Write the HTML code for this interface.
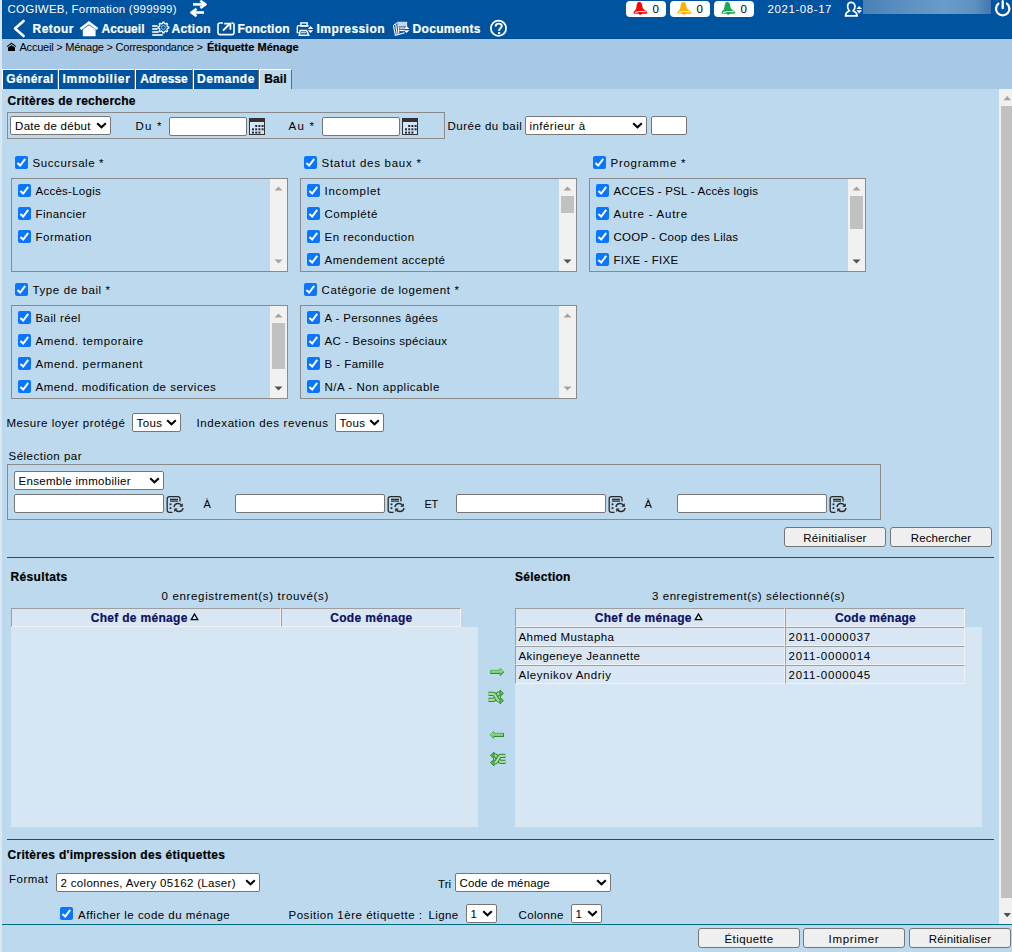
<!DOCTYPE html>
<html><head><meta charset="utf-8"><style>
html,body{margin:0;padding:0}
body{width:1012px;height:952px;position:relative;overflow:hidden;font-family:"Liberation Sans", sans-serif;background:#bdd9ed}
.t{position:absolute;white-space:nowrap}
svg{overflow:visible}
</style></head><body>
<div style="position:absolute;left:0px;top:0px;width:2px;height:952px;background:#d9e7f3"></div>
<div style="position:absolute;left:2px;top:0px;width:1010px;height:39px;background:#00539f"></div>
<div style="position:absolute;left:2px;top:38px;width:1010px;height:1px;background:#004d94"></div>
<div style="position:absolute;left:2px;top:39px;width:1010px;height:50px;background:#a8c9e5"></div>
<div style="position:absolute;left:2px;top:89px;width:1010px;height:863px;background:#bdd9ed"></div>
<div class="t" style="left:7.50px;top:1.00px;font-size:11.5px;line-height:16px;color:#fff;letter-spacing:0.231px">COGIWEB, Formation (999999)</div>
<svg style="position:absolute;left:188px;top:0px" width="22" height="18" viewBox="0 0 22 18"><g fill="none" stroke="#fff" stroke-width="2.6" stroke-linecap="butt" stroke-linejoin="round"><path d="M5 4.4H16.6"/><path d="M12.3 0.8L17.4 4.4L12.3 8"/><path d="M16 12.5H4.4"/><path d="M8.6 8.9L3.4 12.5L8.6 16.1"/></g></svg>
<div style="position:absolute;left:626px;top:1px;width:40px;height:16px;background:#fff;border-radius:4px"></div>
<svg style="position:absolute;left:626px;top:0px" width="40" height="18" viewBox="0 0 40 18"><path d="M13.4 1.7C11.4 1.9 10.7 3.8 10.5 6.4C10.3 8.9 9.6 10.1 7.9 11.4C7.1 12.1 7.5 13.7 8.7 13.7H20C21.2 13.7 21.5 12.1 20.7 11.4C19 10.1 16.5 8.9 16.3 6.4C16.1 3.8 15.4 1.9 13.4 1.7Z" fill="#ff0000"/><path d="M8.9 12.5Q14 10.9 19.9 11.8" fill="none" stroke="#fff" stroke-width="1.1"/><circle cx="14.3" cy="13.3" r="1.5" fill="#ff0000"/></svg>
<div class="t" style="left:652.50px;top:1.00px;font-size:11.5px;line-height:16px;color:#000;letter-spacing:0.594px">0</div>
<div style="position:absolute;left:670px;top:1px;width:40px;height:16px;background:#fff;border-radius:4px"></div>
<svg style="position:absolute;left:670px;top:0px" width="40" height="18" viewBox="0 0 40 18"><path d="M13.4 1.7C11.4 1.9 10.7 3.8 10.5 6.4C10.3 8.9 9.6 10.1 7.9 11.4C7.1 12.1 7.5 13.7 8.7 13.7H20C21.2 13.7 21.5 12.1 20.7 11.4C19 10.1 16.5 8.9 16.3 6.4C16.1 3.8 15.4 1.9 13.4 1.7Z" fill="#ffb000"/><path d="M8.9 12.5Q14 10.9 19.9 11.8" fill="none" stroke="#fff" stroke-width="1.1"/><circle cx="14.3" cy="13.3" r="1.5" fill="#ffb000"/></svg>
<div class="t" style="left:696.50px;top:1.00px;font-size:11.5px;line-height:16px;color:#000;letter-spacing:0.594px">0</div>
<div style="position:absolute;left:714px;top:1px;width:40px;height:16px;background:#fff;border-radius:4px"></div>
<svg style="position:absolute;left:714px;top:0px" width="40" height="18" viewBox="0 0 40 18"><path d="M13.4 1.7C11.4 1.9 10.7 3.8 10.5 6.4C10.3 8.9 9.6 10.1 7.9 11.4C7.1 12.1 7.5 13.7 8.7 13.7H20C21.2 13.7 21.5 12.1 20.7 11.4C19 10.1 16.5 8.9 16.3 6.4C16.1 3.8 15.4 1.9 13.4 1.7Z" fill="#1aaa55"/><path d="M8.9 12.5Q14 10.9 19.9 11.8" fill="none" stroke="#fff" stroke-width="1.1"/><circle cx="14.3" cy="13.3" r="1.5" fill="#1aaa55"/></svg>
<div class="t" style="left:740.50px;top:1.00px;font-size:11.5px;line-height:16px;color:#000;letter-spacing:0.594px">0</div>
<div class="t" style="left:767.50px;top:1.00px;font-size:11.5px;line-height:16px;color:#fff;letter-spacing:0.575px">2021-08-17</div>
<svg style="position:absolute;left:844px;top:1px" width="20" height="17" viewBox="0 0 20 17"><path d="M7.3 1.4C5 1.4 3.6 3.2 3.6 5.6C3.6 7.4 4.4 8.8 5.4 9.8C3 10.8 1.7 12.4 1.5 14.8H13.1C12.9 12.4 11.6 10.8 9.2 9.8C10.2 8.8 11 7.4 11 5.6C11 3.2 9.6 1.4 7.3 1.4Z" fill="none" stroke="#fff" stroke-width="1.7"/><path d="M12.4 7.9L15.2 5L18 7.9Z M12.4 9.2L15.2 12.6L18 9.2Z" fill="#fff"/></svg>
<div style="position:absolute;left:863px;top:0;width:128px;height:14px;background:linear-gradient(90deg,#4a80b6 0%,#5b8fc0 30%,#6a9cc9 65%,#5d90c0 88%,#4277ae 100%)"></div>
<svg style="position:absolute;left:993px;top:0px" width="19" height="17" viewBox="0 0 19 17"><g fill="none" stroke="#fff" stroke-width="2.3" stroke-linecap="round"><path d="M5.4 3.6A6.7 6.7 0 1 0 14 3.6"/><path d="M9.7 1.2V8.2"/></g></svg>
<svg style="position:absolute;left:12px;top:19px" width="14" height="19" viewBox="0 0 14 19"><path d="M11.6 2L3 9.5L11.6 17" fill="none" stroke="#fff" stroke-width="2.6" stroke-linecap="round" stroke-linejoin="round"/></svg>
<div class="t" style="left:32.50px;top:21.00px;font-size:12.0px;line-height:16px;color:#fff;font-weight:700;-webkit-text-stroke:0.2px #fff;letter-spacing:0.466px">Retour</div>
<svg style="position:absolute;left:79px;top:20px" width="20" height="18" viewBox="0 0 20 18"><path d="M1.5 9L10 2.6L18.5 9" fill="none" stroke="#fff" stroke-width="2.6"/><path d="M3.8 9.6L10 5.2L16.6 9.6V16.2H3.8Z" fill="#fff"/></svg>
<div class="t" style="left:101.50px;top:21.00px;font-size:12.0px;line-height:16px;color:#fff;font-weight:700;-webkit-text-stroke:0.2px #fff;letter-spacing:0.052px">Accueil</div>
<svg style="position:absolute;left:151px;top:20px" width="20" height="18" viewBox="0 0 20 18"><g fill="#fff"><rect x="1.2" y="5.2" width="5.4" height="1.6"/><rect x="1.2" y="8.2" width="5.4" height="1.6"/><rect x="1.2" y="11.2" width="6.6" height="1.6"/><rect x="1.2" y="14.2" width="10.6" height="1.6"/></g><g transform="translate(12.4 7.5)"><path d="M3.89 -0.94 L5.35 -0.70 L5.35 0.70 L3.89 0.94 L3.70 1.53 L3.41 2.08 L4.28 3.29 L3.29 4.28 L2.08 3.41 L1.53 3.70 L0.94 3.89 L0.70 5.35 L-0.70 5.35 L-0.94 3.89 L-1.53 3.70 L-2.08 3.41 L-3.29 4.28 L-4.28 3.29 L-3.41 2.08 L-3.70 1.53 L-3.89 0.94 L-5.35 0.70 L-5.35 -0.70 L-3.89 -0.94 L-3.70 -1.53 L-3.41 -2.08 L-4.28 -3.29 L-3.29 -4.28 L-2.08 -3.41 L-1.53 -3.70 L-0.94 -3.89 L-0.70 -5.35 L0.70 -5.35 L0.94 -3.89 L1.53 -3.70 L2.08 -3.41 L3.29 -4.28 L4.28 -3.29 L3.41 -2.08 L3.70 -1.53Z" fill="none" stroke="#fff" stroke-width="1.2" stroke-linejoin="round"/><circle r="1.9" fill="none" stroke="#9ec3e6" stroke-width="0.9"/></g></svg>
<div class="t" style="left:171.50px;top:21.00px;font-size:12.0px;line-height:16px;color:#fff;font-weight:700;-webkit-text-stroke:0.2px #fff;letter-spacing:0.331px">Action</div>
<svg style="position:absolute;left:217px;top:22px" width="19" height="14" viewBox="0 0 19 14"><path d="M6 1H3A2 2 0 0 0 1 3V10.6A2 2 0 0 0 3 12.6H15A2 2 0 0 0 17 10.6V3A2 2 0 0 0 15 1H14.5" fill="none" stroke="#fff" stroke-width="1.6"/><path d="M6 8.6L12.8 1.8" stroke="#fff" stroke-width="2"/><path d="M7.2 1.6H13.4V7.8" fill="none" stroke="#fff" stroke-width="1.8"/></svg>
<div class="t" style="left:237.50px;top:21.00px;font-size:12.0px;line-height:16px;color:#fff;font-weight:700;-webkit-text-stroke:0.2px #fff;letter-spacing:0.192px">Fonction</div>
<svg style="position:absolute;left:296px;top:21px" width="19" height="16" viewBox="0 0 19 16"><g fill="none" stroke="#fff" stroke-width="1.4"><rect x="4.9" y="1.9" width="6.2" height="3.2"/><path d="M2.8 11.6H1.3V6.1Q1.3 4.6 2.8 4.6H11.4Q12.4 4.6 12.6 5.4"/><path d="M4.2 9.4H10.6L12.8 14.3H3.2Z"/></g><rect x="4.6" y="10.6" width="5.6" height="1.6" fill="#c8d4e4"/><path d="M11.9 7.9L14.6 5L17.3 7.9Z M11.9 9.2L14.6 12.1L17.3 9.2Z" fill="#fff"/></svg>
<div class="t" style="left:316.50px;top:21.00px;font-size:12.0px;line-height:16px;color:#fff;font-weight:700;-webkit-text-stroke:0.2px #fff;letter-spacing:0.441px">Impression</div>
<svg style="position:absolute;left:392px;top:21px" width="19" height="16" viewBox="0 0 19 16"><g fill="none" stroke="#fff" stroke-width="1.1"><path d="M1.4 4.4L3.4 14.4L12.6 11.8"/><path d="M3.6 3.2L5.2 13.2"/><path d="M5.9 1.6L6.8 12.4"/></g><path d="M5.6 0.8H15.2V5.4H6.1Z" fill="#c6d6e8"/><path d="M1.4 4.4L5.6 1.2" stroke="#e6eef7" stroke-width="1"/><rect x="7.4" y="6.4" width="4.8" height="1.3" fill="#fff"/><rect x="7.4" y="8.8" width="4.8" height="1.3" fill="#fff"/><path d="M11.8 7.9L14.6 5L17.4 7.9Z M11.8 9.2L14.6 12.1L17.4 9.2Z" fill="#fff"/></svg>
<div class="t" style="left:412.50px;top:21.00px;font-size:12.0px;line-height:16px;color:#fff;font-weight:700;-webkit-text-stroke:0.2px #fff;letter-spacing:0.332px">Documents</div>
<svg style="position:absolute;left:489px;top:20px" width="19" height="18" viewBox="0 0 19 18"><circle cx="9.5" cy="8.3" r="7.6" fill="none" stroke="#fff" stroke-width="1.8"/><path d="M6.6 6.4C6.6 4.6 7.9 3.6 9.7 3.6C11.5 3.6 12.8 4.6 12.8 6.1C12.8 8 10.1 8.4 10.1 10.4V10.9" fill="none" stroke="#fff" stroke-width="1.9"/><rect x="9" y="12" width="2.2" height="2" fill="#fff"/></svg>
<svg style="position:absolute;left:6px;top:42px" width="11" height="10" viewBox="0 0 11 10"><path d="M1 4.6L5.5 1.3L10 4.6" fill="none" stroke="#111" stroke-width="1.1"/><path d="M2 5.6L5.5 3.2L9 5.6V8.9H2Z" fill="#000"/></svg>
<div class="t" style="left:19.50px;top:39.00px;font-size:11.0px;line-height:16px;color:#000;letter-spacing:-0.223px">Accueil &gt; Ménage &gt; Correspondance &gt;</div>
<div class="t" style="left:207.00px;top:39.00px;font-size:11.0px;line-height:16px;color:#000;font-weight:700;-webkit-text-stroke:0.2px #000;letter-spacing:0.035px">Étiquette Ménage</div>
<div style="position:absolute;left:2px;top:69px;width:56px;height:20px;box-sizing:border-box;background:#00539f;border-top:1px solid #fff;border-left:1px solid #fff;border-right:1px solid #6a6a6a"></div>
<div class="t" style="left:6.31px;top:71.00px;font-size:12.0px;line-height:16px;color:#fff;font-weight:700;-webkit-text-stroke:0.2px #fff;letter-spacing:0.383px">Général</div>
<div style="position:absolute;left:58px;top:69px;width:77px;height:20px;box-sizing:border-box;background:#00539f;border-top:1px solid #fff;border-left:1px solid #fff;border-right:1px solid #6a6a6a"></div>
<div class="t" style="left:62.43px;top:71.00px;font-size:12.0px;line-height:16px;color:#fff;font-weight:700;-webkit-text-stroke:0.2px #fff;letter-spacing:0.746px">Immobilier</div>
<div style="position:absolute;left:135px;top:69px;width:58px;height:20px;box-sizing:border-box;background:#00539f;border-top:1px solid #fff;border-left:1px solid #fff;border-right:1px solid #6a6a6a"></div>
<div class="t" style="left:140.31px;top:71.00px;font-size:12.0px;line-height:16px;color:#fff;font-weight:700;-webkit-text-stroke:0.2px #fff">Adresse</div>
<div style="position:absolute;left:193px;top:69px;width:66px;height:20px;box-sizing:border-box;background:#00539f;border-top:1px solid #fff;border-left:1px solid #fff;border-right:1px solid #6a6a6a"></div>
<div class="t" style="left:197.08px;top:71.00px;font-size:12.0px;line-height:16px;color:#fff;font-weight:700;-webkit-text-stroke:0.2px #fff;letter-spacing:0.545px">Demande</div>
<div style="position:absolute;left:259px;top:69px;width:33px;height:20px;box-sizing:border-box;background:#bdd9ed;border-top:1px solid #fff;border-left:1px solid #fff;border-right:1px solid #6a6a6a"></div>
<div class="t" style="left:264.24px;top:71.00px;font-size:12.0px;line-height:16px;color:#000;font-weight:700;-webkit-text-stroke:0.2px #000;letter-spacing:0.128px">Bail</div>
<div class="t" style="left:7.50px;top:93.00px;font-size:12.0px;line-height:16px;color:#000;font-weight:700;-webkit-text-stroke:0.2px #000;letter-spacing:0.230px">Critères de recherche</div>
<div style="position:absolute;left:7px;top:112px;width:438px;height:27px;box-sizing:border-box;border:1px solid #8a8a8a"></div>
<div style="position:absolute;left:10px;top:116px;width:101px;height:19px;box-sizing:border-box;background:#fff;border:1px solid #767676;border-radius:2px"></div>
<div class="t" style="left:15.10px;top:118.00px;font-size:11.5px;line-height:16px;color:#000;letter-spacing:0.253px">Date de début</div>
<svg style="position:absolute;left:96px;top:122px" width="11" height="7" viewBox="0 0 11 7"><path d="M1.2 1.2L5.5 5.3L9.8 1.2" fill="none" stroke="#000" stroke-width="2"/></svg>
<div class="t" style="left:135.50px;top:118.00px;font-size:11.5px;line-height:16px;color:#000;letter-spacing:1.208px">Du *</div>
<div style="position:absolute;left:169px;top:117px;width:78px;height:19px;box-sizing:border-box;background:#fff;border:1px solid #767676;border-radius:2px"></div>
<svg style="position:absolute;left:249px;top:117.6px" width="17" height="18" viewBox="0 0 17 18"><rect x="0.5" y="0.5" width="15" height="16" fill="#d6e6f4" stroke="#333" stroke-width="1"/><rect x="0" y="0" width="16" height="4" fill="#333"/><rect x="6.2" y="7.0" width="2" height="2" fill="#2a2a3a"/><rect x="9.4" y="7.0" width="2" height="2" fill="#2a2a3a"/><rect x="12.6" y="7.0" width="2" height="2" fill="#2a2a3a"/><rect x="3.0" y="10.3" width="2" height="2" fill="#2a2a3a"/><rect x="6.2" y="10.3" width="2" height="2" fill="#2a2a3a"/><rect x="9.4" y="10.3" width="2" height="2" fill="#2a2a3a"/><rect x="12.6" y="10.3" width="2" height="2" fill="#2a2a3a"/><rect x="3.0" y="13.6" width="2" height="2" fill="#2a2a3a"/><rect x="6.2" y="13.6" width="2" height="2" fill="#2a2a3a"/><rect x="9.4" y="13.6" width="2" height="2" fill="#2a2a3a"/></svg>
<div class="t" style="left:288.50px;top:118.00px;font-size:11.5px;line-height:16px;color:#000;letter-spacing:1.217px">Au *</div>
<div style="position:absolute;left:322px;top:117px;width:78px;height:19px;box-sizing:border-box;background:#fff;border:1px solid #767676;border-radius:2px"></div>
<svg style="position:absolute;left:402px;top:117.6px" width="17" height="18" viewBox="0 0 17 18"><rect x="0.5" y="0.5" width="15" height="16" fill="#d6e6f4" stroke="#333" stroke-width="1"/><rect x="0" y="0" width="16" height="4" fill="#333"/><rect x="6.2" y="7.0" width="2" height="2" fill="#2a2a3a"/><rect x="9.4" y="7.0" width="2" height="2" fill="#2a2a3a"/><rect x="12.6" y="7.0" width="2" height="2" fill="#2a2a3a"/><rect x="3.0" y="10.3" width="2" height="2" fill="#2a2a3a"/><rect x="6.2" y="10.3" width="2" height="2" fill="#2a2a3a"/><rect x="9.4" y="10.3" width="2" height="2" fill="#2a2a3a"/><rect x="12.6" y="10.3" width="2" height="2" fill="#2a2a3a"/><rect x="3.0" y="13.6" width="2" height="2" fill="#2a2a3a"/><rect x="6.2" y="13.6" width="2" height="2" fill="#2a2a3a"/><rect x="9.4" y="13.6" width="2" height="2" fill="#2a2a3a"/></svg>
<div class="t" style="left:447.50px;top:118.00px;font-size:11.5px;line-height:16px;color:#000;letter-spacing:0.491px">Durée du bail</div>
<div style="position:absolute;left:525px;top:116px;width:122px;height:19px;box-sizing:border-box;background:#fff;border:1px solid #767676;border-radius:2px"></div>
<div class="t" style="left:529.50px;top:118.00px;font-size:11.5px;line-height:16px;color:#000;letter-spacing:0.456px">inférieur à</div>
<svg style="position:absolute;left:632px;top:122px" width="11" height="7" viewBox="0 0 11 7"><path d="M1.2 1.2L5.5 5.3L9.8 1.2" fill="none" stroke="#000" stroke-width="2"/></svg>
<div style="position:absolute;left:651px;top:116px;width:36px;height:19px;box-sizing:border-box;background:#fff;border:1px solid #767676;border-radius:2px"></div>
<div style="position:absolute;left:15px;top:156px;width:13px;height:13px;background:#0a75ff;border-radius:2px"></div>
<svg style="position:absolute;left:15px;top:156px" width="13" height="13" viewBox="0 0 13 13"><path d="M2.4 7L5.2 9.6L10.2 2.9" fill="none" stroke="#fff" stroke-width="2"/></svg>
<div class="t" style="left:32.50px;top:155.00px;font-size:11.5px;line-height:16px;color:#000;letter-spacing:0.585px">Succursale *</div>
<div style="position:absolute;left:11px;top:178px;width:277px;height:94px;box-sizing:border-box;border:1px solid #8a8a8a"></div>
<div style="position:absolute;left:270px;top:179px;width:17px;height:92px;background:#f1f1f1"></div>
<svg style="position:absolute;left:270px;top:179px" width="17" height="17" viewBox="0 0 17 17"><path d="M4.5 11.5L8.5 7.5L12.5 11.5Z" fill="#a3a3a3"/></svg>
<svg style="position:absolute;left:270px;top:254px" width="17" height="17" viewBox="0 0 17 17"><path d="M4.5 5.5L8.5 9.5L12.5 5.5Z" fill="#a3a3a3"/></svg>
<div style="position:absolute;left:18px;top:184px;width:13px;height:13px;background:#0a75ff;border-radius:2px"></div>
<svg style="position:absolute;left:18px;top:184px" width="13" height="13" viewBox="0 0 13 13"><path d="M2.4 7L5.2 9.6L10.2 2.9" fill="none" stroke="#fff" stroke-width="2"/></svg>
<div class="t" style="left:35.50px;top:183.00px;font-size:11.5px;line-height:16px;color:#000;letter-spacing:0.256px">Accès-Logis</div>
<div style="position:absolute;left:18px;top:207px;width:13px;height:13px;background:#0a75ff;border-radius:2px"></div>
<svg style="position:absolute;left:18px;top:207px" width="13" height="13" viewBox="0 0 13 13"><path d="M2.4 7L5.2 9.6L10.2 2.9" fill="none" stroke="#fff" stroke-width="2"/></svg>
<div class="t" style="left:35.50px;top:206.00px;font-size:11.5px;line-height:16px;color:#000;letter-spacing:0.423px">Financier</div>
<div style="position:absolute;left:18px;top:230px;width:13px;height:13px;background:#0a75ff;border-radius:2px"></div>
<svg style="position:absolute;left:18px;top:230px" width="13" height="13" viewBox="0 0 13 13"><path d="M2.4 7L5.2 9.6L10.2 2.9" fill="none" stroke="#fff" stroke-width="2"/></svg>
<div class="t" style="left:35.50px;top:229.00px;font-size:11.5px;line-height:16px;color:#000;letter-spacing:0.527px">Formation</div>
<div style="position:absolute;left:304px;top:156px;width:13px;height:13px;background:#0a75ff;border-radius:2px"></div>
<svg style="position:absolute;left:304px;top:156px" width="13" height="13" viewBox="0 0 13 13"><path d="M2.4 7L5.2 9.6L10.2 2.9" fill="none" stroke="#fff" stroke-width="2"/></svg>
<div class="t" style="left:321.50px;top:155.00px;font-size:11.5px;line-height:16px;color:#000;letter-spacing:0.738px">Statut des baux *</div>
<div style="position:absolute;left:300px;top:178px;width:277px;height:94px;box-sizing:border-box;border:1px solid #8a8a8a"></div>
<div style="position:absolute;left:559px;top:179px;width:17px;height:92px;background:#f1f1f1"></div>
<svg style="position:absolute;left:559px;top:179px" width="17" height="17" viewBox="0 0 17 17"><path d="M4.5 11.5L8.5 7.5L12.5 11.5Z" fill="#a3a3a3"/></svg>
<svg style="position:absolute;left:559px;top:254px" width="17" height="17" viewBox="0 0 17 17"><path d="M4.5 5.5L8.5 9.5L12.5 5.5Z" fill="#505050"/></svg>
<div style="position:absolute;left:561px;top:196px;width:13px;height:17px;background:#c1c1c1"></div>
<div style="position:absolute;left:307px;top:184px;width:13px;height:13px;background:#0a75ff;border-radius:2px"></div>
<svg style="position:absolute;left:307px;top:184px" width="13" height="13" viewBox="0 0 13 13"><path d="M2.4 7L5.2 9.6L10.2 2.9" fill="none" stroke="#fff" stroke-width="2"/></svg>
<div class="t" style="left:324.50px;top:183.00px;font-size:11.5px;line-height:16px;color:#000;letter-spacing:0.743px">Incomplet</div>
<div style="position:absolute;left:307px;top:207px;width:13px;height:13px;background:#0a75ff;border-radius:2px"></div>
<svg style="position:absolute;left:307px;top:207px" width="13" height="13" viewBox="0 0 13 13"><path d="M2.4 7L5.2 9.6L10.2 2.9" fill="none" stroke="#fff" stroke-width="2"/></svg>
<div class="t" style="left:324.50px;top:206.00px;font-size:11.5px;line-height:16px;color:#000;letter-spacing:0.526px">Complété</div>
<div style="position:absolute;left:307px;top:230px;width:13px;height:13px;background:#0a75ff;border-radius:2px"></div>
<svg style="position:absolute;left:307px;top:230px" width="13" height="13" viewBox="0 0 13 13"><path d="M2.4 7L5.2 9.6L10.2 2.9" fill="none" stroke="#fff" stroke-width="2"/></svg>
<div class="t" style="left:324.50px;top:229.00px;font-size:11.5px;line-height:16px;color:#000;letter-spacing:0.462px">En reconduction</div>
<div style="position:absolute;left:307px;top:253px;width:13px;height:13px;background:#0a75ff;border-radius:2px"></div>
<svg style="position:absolute;left:307px;top:253px" width="13" height="13" viewBox="0 0 13 13"><path d="M2.4 7L5.2 9.6L10.2 2.9" fill="none" stroke="#fff" stroke-width="2"/></svg>
<div class="t" style="left:324.50px;top:252.00px;font-size:11.5px;line-height:16px;color:#000;letter-spacing:0.507px">Amendement accepté</div>
<div style="position:absolute;left:593px;top:156px;width:13px;height:13px;background:#0a75ff;border-radius:2px"></div>
<svg style="position:absolute;left:593px;top:156px" width="13" height="13" viewBox="0 0 13 13"><path d="M2.4 7L5.2 9.6L10.2 2.9" fill="none" stroke="#fff" stroke-width="2"/></svg>
<div class="t" style="left:610.50px;top:155.00px;font-size:11.5px;line-height:16px;color:#000;letter-spacing:0.715px">Programme *</div>
<div style="position:absolute;left:589px;top:178px;width:277px;height:94px;box-sizing:border-box;border:1px solid #8a8a8a"></div>
<div style="position:absolute;left:848px;top:179px;width:17px;height:92px;background:#f1f1f1"></div>
<svg style="position:absolute;left:848px;top:179px" width="17" height="17" viewBox="0 0 17 17"><path d="M4.5 11.5L8.5 7.5L12.5 11.5Z" fill="#a3a3a3"/></svg>
<svg style="position:absolute;left:848px;top:254px" width="17" height="17" viewBox="0 0 17 17"><path d="M4.5 5.5L8.5 9.5L12.5 5.5Z" fill="#505050"/></svg>
<div style="position:absolute;left:850px;top:196px;width:13px;height:33px;background:#c1c1c1"></div>
<div style="position:absolute;left:596px;top:184px;width:13px;height:13px;background:#0a75ff;border-radius:2px"></div>
<svg style="position:absolute;left:596px;top:184px" width="13" height="13" viewBox="0 0 13 13"><path d="M2.4 7L5.2 9.6L10.2 2.9" fill="none" stroke="#fff" stroke-width="2"/></svg>
<div class="t" style="left:613.50px;top:183.00px;font-size:11.5px;line-height:16px;color:#000;letter-spacing:0.233px">ACCES - PSL - Accès logis</div>
<div style="position:absolute;left:596px;top:207px;width:13px;height:13px;background:#0a75ff;border-radius:2px"></div>
<svg style="position:absolute;left:596px;top:207px" width="13" height="13" viewBox="0 0 13 13"><path d="M2.4 7L5.2 9.6L10.2 2.9" fill="none" stroke="#fff" stroke-width="2"/></svg>
<div class="t" style="left:613.50px;top:206.00px;font-size:11.5px;line-height:16px;color:#000;letter-spacing:0.753px">Autre - Autre</div>
<div style="position:absolute;left:596px;top:230px;width:13px;height:13px;background:#0a75ff;border-radius:2px"></div>
<svg style="position:absolute;left:596px;top:230px" width="13" height="13" viewBox="0 0 13 13"><path d="M2.4 7L5.2 9.6L10.2 2.9" fill="none" stroke="#fff" stroke-width="2"/></svg>
<div class="t" style="left:613.50px;top:229.00px;font-size:11.5px;line-height:16px;color:#000;letter-spacing:0.232px">COOP - Coop des Lilas</div>
<div style="position:absolute;left:596px;top:253px;width:13px;height:13px;background:#0a75ff;border-radius:2px"></div>
<svg style="position:absolute;left:596px;top:253px" width="13" height="13" viewBox="0 0 13 13"><path d="M2.4 7L5.2 9.6L10.2 2.9" fill="none" stroke="#fff" stroke-width="2"/></svg>
<div class="t" style="left:613.50px;top:252.00px;font-size:11.5px;line-height:16px;color:#000;letter-spacing:0.336px">FIXE - FIXE</div>
<div style="position:absolute;left:15px;top:283px;width:13px;height:13px;background:#0a75ff;border-radius:2px"></div>
<svg style="position:absolute;left:15px;top:283px" width="13" height="13" viewBox="0 0 13 13"><path d="M2.4 7L5.2 9.6L10.2 2.9" fill="none" stroke="#fff" stroke-width="2"/></svg>
<div class="t" style="left:32.50px;top:282.00px;font-size:11.5px;line-height:16px;color:#000;letter-spacing:0.601px">Type de bail *</div>
<div style="position:absolute;left:11px;top:305px;width:277px;height:94px;box-sizing:border-box;border:1px solid #8a8a8a"></div>
<div style="position:absolute;left:270px;top:306px;width:17px;height:92px;background:#f1f1f1"></div>
<svg style="position:absolute;left:270px;top:306px" width="17" height="17" viewBox="0 0 17 17"><path d="M4.5 11.5L8.5 7.5L12.5 11.5Z" fill="#a3a3a3"/></svg>
<svg style="position:absolute;left:270px;top:381px" width="17" height="17" viewBox="0 0 17 17"><path d="M4.5 5.5L8.5 9.5L12.5 5.5Z" fill="#505050"/></svg>
<div style="position:absolute;left:272px;top:323px;width:13px;height:46px;background:#c1c1c1"></div>
<div style="position:absolute;left:18px;top:311px;width:13px;height:13px;background:#0a75ff;border-radius:2px"></div>
<svg style="position:absolute;left:18px;top:311px" width="13" height="13" viewBox="0 0 13 13"><path d="M2.4 7L5.2 9.6L10.2 2.9" fill="none" stroke="#fff" stroke-width="2"/></svg>
<div class="t" style="left:35.50px;top:310.00px;font-size:11.5px;line-height:16px;color:#000;letter-spacing:0.417px">Bail réel</div>
<div style="position:absolute;left:18px;top:334px;width:13px;height:13px;background:#0a75ff;border-radius:2px"></div>
<svg style="position:absolute;left:18px;top:334px" width="13" height="13" viewBox="0 0 13 13"><path d="M2.4 7L5.2 9.6L10.2 2.9" fill="none" stroke="#fff" stroke-width="2"/></svg>
<div class="t" style="left:35.50px;top:333.00px;font-size:11.5px;line-height:16px;color:#000;letter-spacing:0.619px">Amend. temporaire</div>
<div style="position:absolute;left:18px;top:357px;width:13px;height:13px;background:#0a75ff;border-radius:2px"></div>
<svg style="position:absolute;left:18px;top:357px" width="13" height="13" viewBox="0 0 13 13"><path d="M2.4 7L5.2 9.6L10.2 2.9" fill="none" stroke="#fff" stroke-width="2"/></svg>
<div class="t" style="left:35.50px;top:356.00px;font-size:11.5px;line-height:16px;color:#000;letter-spacing:0.613px">Amend. permanent</div>
<div style="position:absolute;left:18px;top:380px;width:13px;height:13px;background:#0a75ff;border-radius:2px"></div>
<svg style="position:absolute;left:18px;top:380px" width="13" height="13" viewBox="0 0 13 13"><path d="M2.4 7L5.2 9.6L10.2 2.9" fill="none" stroke="#fff" stroke-width="2"/></svg>
<div class="t" style="left:35.50px;top:379.00px;font-size:11.5px;line-height:16px;color:#000;letter-spacing:0.491px">Amend. modification de services</div>
<div style="position:absolute;left:304px;top:283px;width:13px;height:13px;background:#0a75ff;border-radius:2px"></div>
<svg style="position:absolute;left:304px;top:283px" width="13" height="13" viewBox="0 0 13 13"><path d="M2.4 7L5.2 9.6L10.2 2.9" fill="none" stroke="#fff" stroke-width="2"/></svg>
<div class="t" style="left:321.50px;top:282.00px;font-size:11.5px;line-height:16px;color:#000;letter-spacing:0.608px">Catégorie de logement *</div>
<div style="position:absolute;left:300px;top:305px;width:277px;height:94px;box-sizing:border-box;border:1px solid #8a8a8a"></div>
<div style="position:absolute;left:559px;top:306px;width:17px;height:92px;background:#f1f1f1"></div>
<svg style="position:absolute;left:559px;top:306px" width="17" height="17" viewBox="0 0 17 17"><path d="M4.5 11.5L8.5 7.5L12.5 11.5Z" fill="#a3a3a3"/></svg>
<svg style="position:absolute;left:559px;top:381px" width="17" height="17" viewBox="0 0 17 17"><path d="M4.5 5.5L8.5 9.5L12.5 5.5Z" fill="#a3a3a3"/></svg>
<div style="position:absolute;left:307px;top:311px;width:13px;height:13px;background:#0a75ff;border-radius:2px"></div>
<svg style="position:absolute;left:307px;top:311px" width="13" height="13" viewBox="0 0 13 13"><path d="M2.4 7L5.2 9.6L10.2 2.9" fill="none" stroke="#fff" stroke-width="2"/></svg>
<div class="t" style="left:324.50px;top:310.00px;font-size:11.5px;line-height:16px;color:#000;letter-spacing:0.363px">A - Personnes âgées</div>
<div style="position:absolute;left:307px;top:334px;width:13px;height:13px;background:#0a75ff;border-radius:2px"></div>
<svg style="position:absolute;left:307px;top:334px" width="13" height="13" viewBox="0 0 13 13"><path d="M2.4 7L5.2 9.6L10.2 2.9" fill="none" stroke="#fff" stroke-width="2"/></svg>
<div class="t" style="left:324.50px;top:333.00px;font-size:11.5px;line-height:16px;color:#000;letter-spacing:0.340px">AC - Besoins spéciaux</div>
<div style="position:absolute;left:307px;top:357px;width:13px;height:13px;background:#0a75ff;border-radius:2px"></div>
<svg style="position:absolute;left:307px;top:357px" width="13" height="13" viewBox="0 0 13 13"><path d="M2.4 7L5.2 9.6L10.2 2.9" fill="none" stroke="#fff" stroke-width="2"/></svg>
<div class="t" style="left:324.50px;top:356.00px;font-size:11.5px;line-height:16px;color:#000;letter-spacing:0.445px">B - Famille</div>
<div style="position:absolute;left:307px;top:380px;width:13px;height:13px;background:#0a75ff;border-radius:2px"></div>
<svg style="position:absolute;left:307px;top:380px" width="13" height="13" viewBox="0 0 13 13"><path d="M2.4 7L5.2 9.6L10.2 2.9" fill="none" stroke="#fff" stroke-width="2"/></svg>
<div class="t" style="left:324.50px;top:379.00px;font-size:11.5px;line-height:16px;color:#000;letter-spacing:0.524px">N/A - Non applicable</div>
<div class="t" style="left:6.50px;top:415.00px;font-size:11.5px;line-height:16px;color:#000;letter-spacing:0.512px">Mesure loyer protégé</div>
<div style="position:absolute;left:132px;top:413px;width:49px;height:19px;box-sizing:border-box;background:#fff;border:1px solid #767676;border-radius:2px"></div>
<div class="t" style="left:136.50px;top:415.00px;font-size:11.5px;line-height:16px;color:#000;letter-spacing:0.401px">Tous</div>
<svg style="position:absolute;left:166px;top:419px" width="11" height="7" viewBox="0 0 11 7"><path d="M1.2 1.2L5.5 5.3L9.8 1.2" fill="none" stroke="#000" stroke-width="2"/></svg>
<div class="t" style="left:196.50px;top:415.00px;font-size:11.5px;line-height:16px;color:#000;letter-spacing:0.599px">Indexation des revenus</div>
<div style="position:absolute;left:335px;top:413px;width:49px;height:19px;box-sizing:border-box;background:#fff;border:1px solid #767676;border-radius:2px"></div>
<div class="t" style="left:339.50px;top:415.00px;font-size:11.5px;line-height:16px;color:#000;letter-spacing:0.401px">Tous</div>
<svg style="position:absolute;left:369px;top:419px" width="11" height="7" viewBox="0 0 11 7"><path d="M1.2 1.2L5.5 5.3L9.8 1.2" fill="none" stroke="#000" stroke-width="2"/></svg>
<div class="t" style="left:8.50px;top:448.00px;font-size:11.5px;line-height:16px;color:#000;letter-spacing:0.490px">Sélection par</div>
<div style="position:absolute;left:7px;top:464px;width:874px;height:56px;box-sizing:border-box;border:1px solid #8a8a8a"></div>
<div style="position:absolute;left:14px;top:471px;width:150px;height:19px;box-sizing:border-box;background:#fff;border:1px solid #767676;border-radius:2px"></div>
<div class="t" style="left:18.50px;top:473.00px;font-size:11.5px;line-height:16px;color:#000;letter-spacing:0.293px">Ensemble immobilier</div>
<svg style="position:absolute;left:149px;top:477px" width="11" height="7" viewBox="0 0 11 7"><path d="M1.2 1.2L5.5 5.3L9.8 1.2" fill="none" stroke="#000" stroke-width="2"/></svg>
<div style="position:absolute;left:14px;top:494px;width:150px;height:19px;box-sizing:border-box;background:#fff;border:1px solid #767676;border-radius:2px"></div>
<svg style="position:absolute;left:166px;top:496px" width="19" height="18" viewBox="0 0 19 18"><g fill="none" stroke="#2b2b2b" stroke-width="1.3"><path d="M6.5 16.3H3.2A2 2 0 0 1 1.2 14.3V2.6A2 2 0 0 1 3.2 0.6H12A2 2 0 0 1 14 2.6V5.6"/><path d="M4 3.3H12M4 5.2H12"/></g><rect x="3.6" y="7.4" width="1.8" height="1.8" fill="#2b2b2b"/><rect x="3.6" y="11.2" width="1.8" height="1.8" fill="#2b2b2b"/><g fill="none" stroke="#2b2b2b" stroke-width="1.5"><path d="M8 11C8.4 8.8 10 7.6 12 7.6C13.4 7.6 14.6 8.2 15.4 9.2"/><path d="M17 12.2C16.6 14.4 15 15.6 13 15.6C11.6 15.6 10.4 15 9.6 14"/></g><path d="M16.8 7.2V10.8H13.2Z" fill="#2b2b2b"/><path d="M8.2 16V12.4H11.8Z" fill="#2b2b2b"/></svg>
<div style="position:absolute;left:235px;top:494px;width:150px;height:19px;box-sizing:border-box;background:#fff;border:1px solid #767676;border-radius:2px"></div>
<svg style="position:absolute;left:387px;top:496px" width="19" height="18" viewBox="0 0 19 18"><g fill="none" stroke="#2b2b2b" stroke-width="1.3"><path d="M6.5 16.3H3.2A2 2 0 0 1 1.2 14.3V2.6A2 2 0 0 1 3.2 0.6H12A2 2 0 0 1 14 2.6V5.6"/><path d="M4 3.3H12M4 5.2H12"/></g><rect x="3.6" y="7.4" width="1.8" height="1.8" fill="#2b2b2b"/><rect x="3.6" y="11.2" width="1.8" height="1.8" fill="#2b2b2b"/><g fill="none" stroke="#2b2b2b" stroke-width="1.5"><path d="M8 11C8.4 8.8 10 7.6 12 7.6C13.4 7.6 14.6 8.2 15.4 9.2"/><path d="M17 12.2C16.6 14.4 15 15.6 13 15.6C11.6 15.6 10.4 15 9.6 14"/></g><path d="M16.8 7.2V10.8H13.2Z" fill="#2b2b2b"/><path d="M8.2 16V12.4H11.8Z" fill="#2b2b2b"/></svg>
<div style="position:absolute;left:456px;top:494px;width:150px;height:19px;box-sizing:border-box;background:#fff;border:1px solid #767676;border-radius:2px"></div>
<svg style="position:absolute;left:608px;top:496px" width="19" height="18" viewBox="0 0 19 18"><g fill="none" stroke="#2b2b2b" stroke-width="1.3"><path d="M6.5 16.3H3.2A2 2 0 0 1 1.2 14.3V2.6A2 2 0 0 1 3.2 0.6H12A2 2 0 0 1 14 2.6V5.6"/><path d="M4 3.3H12M4 5.2H12"/></g><rect x="3.6" y="7.4" width="1.8" height="1.8" fill="#2b2b2b"/><rect x="3.6" y="11.2" width="1.8" height="1.8" fill="#2b2b2b"/><g fill="none" stroke="#2b2b2b" stroke-width="1.5"><path d="M8 11C8.4 8.8 10 7.6 12 7.6C13.4 7.6 14.6 8.2 15.4 9.2"/><path d="M17 12.2C16.6 14.4 15 15.6 13 15.6C11.6 15.6 10.4 15 9.6 14"/></g><path d="M16.8 7.2V10.8H13.2Z" fill="#2b2b2b"/><path d="M8.2 16V12.4H11.8Z" fill="#2b2b2b"/></svg>
<div style="position:absolute;left:677px;top:494px;width:150px;height:19px;box-sizing:border-box;background:#fff;border:1px solid #767676;border-radius:2px"></div>
<svg style="position:absolute;left:829px;top:496px" width="19" height="18" viewBox="0 0 19 18"><g fill="none" stroke="#2b2b2b" stroke-width="1.3"><path d="M6.5 16.3H3.2A2 2 0 0 1 1.2 14.3V2.6A2 2 0 0 1 3.2 0.6H12A2 2 0 0 1 14 2.6V5.6"/><path d="M4 3.3H12M4 5.2H12"/></g><rect x="3.6" y="7.4" width="1.8" height="1.8" fill="#2b2b2b"/><rect x="3.6" y="11.2" width="1.8" height="1.8" fill="#2b2b2b"/><g fill="none" stroke="#2b2b2b" stroke-width="1.5"><path d="M8 11C8.4 8.8 10 7.6 12 7.6C13.4 7.6 14.6 8.2 15.4 9.2"/><path d="M17 12.2C16.6 14.4 15 15.6 13 15.6C11.6 15.6 10.4 15 9.6 14"/></g><path d="M16.8 7.2V10.8H13.2Z" fill="#2b2b2b"/><path d="M8.2 16V12.4H11.8Z" fill="#2b2b2b"/></svg>
<div class="t" style="left:203.50px;top:496.00px;font-size:11.0px;line-height:16px;color:#000">À</div>
<div class="t" style="left:424.50px;top:496.00px;font-size:11.0px;line-height:16px;color:#000;letter-spacing:-0.363px">ET</div>
<div class="t" style="left:644.50px;top:496.00px;font-size:11.0px;line-height:16px;color:#000">À</div>
<div style="position:absolute;left:784px;top:527px;width:102px;height:20px;box-sizing:border-box;background:#efefef;border:1px solid #767676;border-radius:3px"></div>
<div class="t" style="left:803.24px;top:530.00px;font-size:11.5px;line-height:16px;color:#000;letter-spacing:0.314px">Réinitialiser</div>
<div style="position:absolute;left:890px;top:527px;width:102px;height:20px;box-sizing:border-box;background:#efefef;border:1px solid #767676;border-radius:3px"></div>
<div class="t" style="left:910.75px;top:530.00px;font-size:11.5px;line-height:16px;color:#000;letter-spacing:0.105px">Rechercher</div>
<div style="position:absolute;left:7px;top:557px;width:987px;height:1px;background:#02549e"></div>
<div class="t" style="left:10.50px;top:569.00px;font-size:12.0px;line-height:16px;color:#000;font-weight:700;-webkit-text-stroke:0.2px #000;letter-spacing:0.346px">Résultats</div>
<div class="t" style="left:161.50px;top:588.00px;font-size:11.5px;line-height:16px;color:#000;letter-spacing:0.661px">0 enregistrement(s) trouvé(s)</div>
<div style="position:absolute;left:11px;top:627px;width:467px;height:200px;background:#d6e6f3"></div>
<div style="position:absolute;left:11px;top:608px;width:270px;height:19px;box-sizing:border-box;background:#d9e7f4;border-top:1px solid #9e9e9e;border-left:1px solid #9e9e9e;border-bottom:1px solid #f2f2f2;border-right:1px solid #f2f2f2"></div>
<div style="position:absolute;left:281px;top:608px;width:180px;height:19px;box-sizing:border-box;background:#d9e7f4;border-top:1px solid #9e9e9e;border-left:1px solid #9e9e9e;border-bottom:1px solid #f2f2f2;border-right:1px solid #f2f2f2"></div>
<div class="t" style="left:90.70px;top:610.00px;font-size:12.0px;line-height:16px;color:#0f0f62;font-weight:700;-webkit-text-stroke:0.2px #0f0f62;letter-spacing:0.307px">Chef de ménage</div>
<svg style="position:absolute;left:190px;top:612.6px" width="9" height="8" viewBox="0 0 9 8"><path d="M4.5 1L7.8 6.6H1.2Z" fill="none" stroke="#000" stroke-width="1.3"/></svg>
<div class="t" style="left:330.20px;top:610.00px;font-size:12.0px;line-height:16px;color:#0f0f62;font-weight:700;-webkit-text-stroke:0.2px #0f0f62;letter-spacing:0.341px">Code ménage</div>
<div class="t" style="left:515.00px;top:569.00px;font-size:12.0px;line-height:16px;color:#000;font-weight:700;-webkit-text-stroke:0.2px #000;letter-spacing:0.255px">Sélection</div>
<div class="t" style="left:652.00px;top:588.00px;font-size:11.5px;line-height:16px;color:#000;letter-spacing:0.552px">3 enregistrement(s) sélectionné(s)</div>
<div style="position:absolute;left:515px;top:627px;width:467px;height:200px;background:#d6e6f3"></div>
<div style="position:absolute;left:515px;top:608px;width:270px;height:19px;box-sizing:border-box;background:#d9e7f4;border-top:1px solid #9e9e9e;border-left:1px solid #9e9e9e;border-bottom:1px solid #f2f2f2;border-right:1px solid #f2f2f2"></div>
<div style="position:absolute;left:785px;top:608px;width:180px;height:19px;box-sizing:border-box;background:#d9e7f4;border-top:1px solid #9e9e9e;border-left:1px solid #9e9e9e;border-bottom:1px solid #f2f2f2;border-right:1px solid #f2f2f2"></div>
<div style="position:absolute;left:515px;top:627px;width:270px;height:19px;box-sizing:border-box;background:#d9e7f4;border-top:1px solid #9e9e9e;border-left:1px solid #9e9e9e;border-bottom:1px solid #f2f2f2;border-right:1px solid #f2f2f2"></div>
<div style="position:absolute;left:785px;top:627px;width:180px;height:19px;box-sizing:border-box;background:#d9e7f4;border-top:1px solid #9e9e9e;border-left:1px solid #9e9e9e;border-bottom:1px solid #f2f2f2;border-right:1px solid #f2f2f2"></div>
<div style="position:absolute;left:515px;top:646px;width:270px;height:19px;box-sizing:border-box;background:#d9e7f4;border-top:1px solid #9e9e9e;border-left:1px solid #9e9e9e;border-bottom:1px solid #f2f2f2;border-right:1px solid #f2f2f2"></div>
<div style="position:absolute;left:785px;top:646px;width:180px;height:19px;box-sizing:border-box;background:#d9e7f4;border-top:1px solid #9e9e9e;border-left:1px solid #9e9e9e;border-bottom:1px solid #f2f2f2;border-right:1px solid #f2f2f2"></div>
<div style="position:absolute;left:515px;top:665px;width:270px;height:19px;box-sizing:border-box;background:#d9e7f4;border-top:1px solid #9e9e9e;border-left:1px solid #9e9e9e;border-bottom:1px solid #f2f2f2;border-right:1px solid #f2f2f2"></div>
<div style="position:absolute;left:785px;top:665px;width:180px;height:19px;box-sizing:border-box;background:#d9e7f4;border-top:1px solid #9e9e9e;border-left:1px solid #9e9e9e;border-bottom:1px solid #f2f2f2;border-right:1px solid #f2f2f2"></div>
<div class="t" style="left:594.70px;top:610.00px;font-size:12.0px;line-height:16px;color:#0f0f62;font-weight:700;-webkit-text-stroke:0.2px #0f0f62;letter-spacing:0.315px">Chef de ménage</div>
<svg style="position:absolute;left:693.6px;top:612.6px" width="9" height="8" viewBox="0 0 9 8"><path d="M4.5 1L7.8 6.6H1.2Z" fill="none" stroke="#000" stroke-width="1.3"/></svg>
<div class="t" style="left:834.90px;top:610.00px;font-size:12.0px;line-height:16px;color:#0f0f62;font-weight:700;-webkit-text-stroke:0.2px #0f0f62;letter-spacing:0.221px">Code ménage</div>
<div class="t" style="left:518.50px;top:629.00px;font-size:11.5px;line-height:16px;color:#000;letter-spacing:0.405px">Ahmed Mustapha</div>
<div class="t" style="left:788.50px;top:629.00px;font-size:11.5px;line-height:16px;color:#000;letter-spacing:0.760px">2011-0000037</div>
<div class="t" style="left:518.50px;top:648.00px;font-size:11.5px;line-height:16px;color:#000;letter-spacing:0.399px">Akingeneye Jeannette</div>
<div class="t" style="left:788.50px;top:648.00px;font-size:11.5px;line-height:16px;color:#000;letter-spacing:0.760px">2011-0000014</div>
<div class="t" style="left:518.50px;top:667.00px;font-size:11.5px;line-height:16px;color:#000;letter-spacing:0.535px">Aleynikov Andriy</div>
<div class="t" style="left:788.50px;top:667.00px;font-size:11.5px;line-height:16px;color:#000;letter-spacing:0.760px">2011-0000045</div>
<svg style="position:absolute;left:489px;top:667px" width="16" height="10" viewBox="0 0 16 10"><defs><linearGradient id="g1" x1="0" y1="0" x2="0" y2="1"><stop offset="0" stop-color="#b4e6ac"/><stop offset="1" stop-color="#5fb95c"/></linearGradient></defs><path d="M1.5 3.3H11.2V1.2L14.8 4.9L11.2 8.6V6.5H1.5Z" fill="url(#g1)" stroke="#56b456" stroke-width="1"/><path d="M11.2 8.6L14.8 4.9M1.5 6.5H11.2" stroke="#2f8a2f" stroke-width="1"/></svg>
<svg style="position:absolute;left:488px;top:689px" width="17" height="16" viewBox="0 0 17 16"><g ><path d="M0.5 10.8H5.2C8 10.8 8.4 4.4 11.4 4.4H12.4" fill="none" stroke="#2f8a2f" stroke-width="4.2"/><path d="M0.5 10.8H5.2C8 10.8 8.4 4.4 11.4 4.4H12.4" fill="none" stroke="#a6dd9f" stroke-width="2.2"/><path d="M0.5 4.9H5.2C8 4.9 8.4 11.6 11.4 11.6H12.4" fill="none" stroke="#2f8a2f" stroke-width="4.2"/><path d="M0.5 4.9H5.2C8 4.9 8.4 11.6 11.4 11.6H12.4" fill="none" stroke="#a6dd9f" stroke-width="2.2"/><path d="M12 1L15.6 4.4L12 7.8Z M12 8.2L15.6 11.6L12 15Z" fill="#56b456" stroke="#2f8a2f" stroke-width="0.8"/></g></svg>
<svg style="position:absolute;left:489px;top:730px" width="16" height="10" viewBox="0 0 16 10"><defs><linearGradient id="g2" x1="0" y1="0" x2="0" y2="1"><stop offset="0" stop-color="#b4e6ac"/><stop offset="1" stop-color="#5fb95c"/></linearGradient></defs><path d="M14.5 3.3H4.8V1.2L1.2 4.9L4.8 8.6V6.5H14.5Z" fill="url(#g2)" stroke="#56b456" stroke-width="1"/><path d="M14.5 3.3V6.5H4.8" fill="none" stroke="#2f8a2f" stroke-width="1.1"/></svg>
<svg style="position:absolute;left:489px;top:751px" width="17" height="16" viewBox="0 0 17 16"><g transform="translate(17 0) scale(-1 1)"><path d="M0.5 10.8H5.2C8 10.8 8.4 4.4 11.4 4.4H12.4" fill="none" stroke="#2f8a2f" stroke-width="4.2"/><path d="M0.5 10.8H5.2C8 10.8 8.4 4.4 11.4 4.4H12.4" fill="none" stroke="#a6dd9f" stroke-width="2.2"/><path d="M0.5 4.9H5.2C8 4.9 8.4 11.6 11.4 11.6H12.4" fill="none" stroke="#2f8a2f" stroke-width="4.2"/><path d="M0.5 4.9H5.2C8 4.9 8.4 11.6 11.4 11.6H12.4" fill="none" stroke="#a6dd9f" stroke-width="2.2"/><path d="M12 1L15.6 4.4L12 7.8Z M12 8.2L15.6 11.6L12 15Z" fill="#56b456" stroke="#2f8a2f" stroke-width="0.8"/></g></svg>
<div style="position:absolute;left:7px;top:839px;width:987px;height:1px;background:#02549e"></div>
<div class="t" style="left:7.50px;top:847.00px;font-size:12.0px;line-height:16px;color:#000;font-weight:700;-webkit-text-stroke:0.2px #000;letter-spacing:0.299px">Critères d'impression des étiquettes</div>
<div class="t" style="left:9.00px;top:871.00px;font-size:11.5px;line-height:16px;color:#000;letter-spacing:0.496px">Format</div>
<div style="position:absolute;left:56px;top:873px;width:204px;height:19px;box-sizing:border-box;background:#fff;border:1px solid #767676;border-radius:2px"></div>
<div class="t" style="left:60.50px;top:875.00px;font-size:11.5px;line-height:16px;color:#000;letter-spacing:0.321px">2 colonnes, Avery 05162 (Laser)</div>
<svg style="position:absolute;left:245px;top:879px" width="11" height="7" viewBox="0 0 11 7"><path d="M1.2 1.2L5.5 5.3L9.8 1.2" fill="none" stroke="#000" stroke-width="2"/></svg>
<div class="t" style="left:438.00px;top:876.00px;font-size:11.5px;line-height:16px;color:#000;letter-spacing:0.058px">Tri</div>
<div style="position:absolute;left:455px;top:873px;width:156px;height:19px;box-sizing:border-box;background:#fff;border:1px solid #767676;border-radius:2px"></div>
<div class="t" style="left:459.50px;top:875.00px;font-size:11.5px;line-height:16px;color:#000;letter-spacing:0.151px">Code de ménage</div>
<svg style="position:absolute;left:596px;top:879px" width="11" height="7" viewBox="0 0 11 7"><path d="M1.2 1.2L5.5 5.3L9.8 1.2" fill="none" stroke="#000" stroke-width="2"/></svg>
<div style="position:absolute;left:60px;top:907px;width:13px;height:13px;background:#0a75ff;border-radius:2px"></div>
<svg style="position:absolute;left:60px;top:907px" width="13" height="13" viewBox="0 0 13 13"><path d="M2.4 7L5.2 9.6L10.2 2.9" fill="none" stroke="#fff" stroke-width="2"/></svg>
<div class="t" style="left:78.10px;top:907.00px;font-size:11.5px;line-height:16px;color:#000;letter-spacing:0.472px">Afficher le code du ménage</div>
<div class="t" style="left:288.50px;top:907.00px;font-size:11.5px;line-height:16px;color:#000;letter-spacing:0.527px">Position 1ère étiquette :</div>
<div class="t" style="left:428.50px;top:907.00px;font-size:11.5px;line-height:16px;color:#000;letter-spacing:0.390px">Ligne</div>
<div style="position:absolute;left:466px;top:904px;width:31px;height:19px;box-sizing:border-box;background:#fff;border:1px solid #767676;border-radius:2px"></div>
<div class="t" style="left:470.50px;top:906.00px;font-size:11.5px;line-height:16px;color:#000">1</div>
<svg style="position:absolute;left:482px;top:910px" width="11" height="7" viewBox="0 0 11 7"><path d="M1.2 1.2L5.5 5.3L9.8 1.2" fill="none" stroke="#000" stroke-width="2"/></svg>
<div class="t" style="left:518.50px;top:907.00px;font-size:11.5px;line-height:16px;color:#000;letter-spacing:0.359px">Colonne</div>
<div style="position:absolute;left:571px;top:904px;width:31px;height:19px;box-sizing:border-box;background:#fff;border:1px solid #767676;border-radius:2px"></div>
<div class="t" style="left:575.50px;top:906.00px;font-size:11.5px;line-height:16px;color:#000">1</div>
<svg style="position:absolute;left:587px;top:910px" width="11" height="7" viewBox="0 0 11 7"><path d="M1.2 1.2L5.5 5.3L9.8 1.2" fill="none" stroke="#000" stroke-width="2"/></svg>
<div style="position:absolute;left:999px;top:89px;width:13px;height:835px;background:#f1f1f1"></div>
<div style="position:absolute;left:1001px;top:106px;width:11px;height:792px;background:#c1c1c1"></div>
<svg style="position:absolute;left:999px;top:89px" width="13" height="17" viewBox="0 0 13 17"><path d="M4.5 11.2L8.2 7L12 11.2Z" fill="#a3a3a3"/></svg>
<svg style="position:absolute;left:999px;top:907px" width="13" height="17" viewBox="0 0 13 17"><path d="M4.5 6L8.2 10.2L12 6Z" fill="#505050"/></svg>
<div style="position:absolute;left:2px;top:924px;width:1010px;height:1px;background:#036c80"></div>
<div style="position:absolute;left:698px;top:928px;width:102px;height:20px;box-sizing:border-box;background:#efefef;border:1px solid #767676;border-radius:3px"></div>
<div class="t" style="left:724.56px;top:931.00px;font-size:11.5px;line-height:16px;color:#000;letter-spacing:0.387px">Étiquette</div>
<div style="position:absolute;left:803px;top:928px;width:102px;height:20px;box-sizing:border-box;background:#efefef;border:1px solid #767676;border-radius:3px"></div>
<div class="t" style="left:828.61px;top:931.00px;font-size:11.5px;line-height:16px;color:#000;letter-spacing:0.675px">Imprimer</div>
<div style="position:absolute;left:909px;top:928px;width:102px;height:20px;box-sizing:border-box;background:#efefef;border:1px solid #767676;border-radius:3px"></div>
<div class="t" style="left:928.68px;top:931.00px;font-size:11.5px;line-height:16px;color:#000;letter-spacing:0.247px">Réinitialiser</div>
</body></html>
